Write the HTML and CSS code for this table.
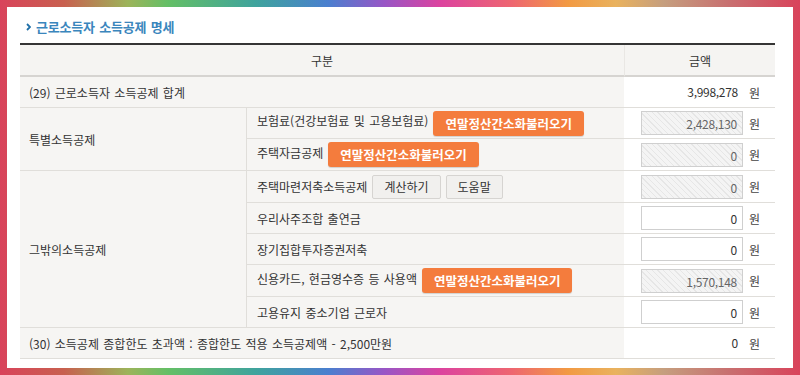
FILE: index.html
```html
<!DOCTYPE html>
<html lang="ko">
<head>
<meta charset="utf-8">
<title>근로소득자 소득공제 명세</title>
<link rel="stylesheet" href="styles.css">
</head>
<body>
<div class="frame">
  <h2 class="title"><svg class="chev" width="5" height="8" viewBox="0 0 5 8"><path d="M1 1 L4 4 L1 7" fill="none" stroke="#1f6fa8" stroke-width="1.8"/></svg>근로소득자 소득공제 명세</h2>
  <table class="grid">
    <colgroup><col class="c1"><col class="c2"><col class="c3"></colgroup>
    <thead>
      <tr><th colspan="2">구분</th><th class="th-amt">금액</th></tr>
    </thead>
    <tbody>
      <tr>
        <td colspan="2" class="label">(29) 근로소득자 소득공제 합계</td>
        <td class="amt"><span class="val">3,998,278</span><span class="won">원</span></td>
      </tr>
      <tr>
        <td rowspan="2" class="label cat">특별소득공제</td>
        <td class="sub"><div class="line"><span class="txt up">보험료(건강보험료 및 고용보험료)</span><button class="btn-o">연말정산간소화불러오기</button></div></td>
        <td class="amt"><span class="inp ro">2,428,130</span><span class="won">원</span></td>
      </tr>
      <tr class="tall">
        <td class="sub"><div class="line"><span class="txt up">주택자금공제</span><button class="btn-o">연말정산간소화불러오기</button></div></td>
        <td class="amt"><span class="inp ro">0</span><span class="won">원</span></td>
      </tr>
      <tr class="tall">
        <td rowspan="5" class="label cat">그밖의소득공제</td>
        <td class="sub"><div class="line"><span class="txt">주택마련저축소득공제</span><button class="btn-g">계산하기</button><button class="btn-g">도움말</button></div></td>
        <td class="amt"><span class="inp ro">0</span><span class="won">원</span></td>
      </tr>
      <tr>
        <td class="sub"><div class="line"><span class="txt">우리사주조합 출연금</span></div></td>
        <td class="amt"><span class="inp">0</span><span class="won">원</span></td>
      </tr>
      <tr>
        <td class="sub"><div class="line"><span class="txt">장기집합투자증권저축</span></div></td>
        <td class="amt"><span class="inp">0</span><span class="won">원</span></td>
      </tr>
      <tr class="tall">
        <td class="sub"><div class="line"><span class="txt up">신용카드, 현금영수증 등 사용액</span><button class="btn-o">연말정산간소화불러오기</button></div></td>
        <td class="amt"><span class="inp ro">1,570,148</span><span class="won">원</span></td>
      </tr>
      <tr>
        <td class="sub"><div class="line"><span class="txt">고용유지 중소기업 근로자</span></div></td>
        <td class="amt"><span class="inp">0</span><span class="won">원</span></td>
      </tr>
      <tr>
        <td colspan="2" class="label">(30) 소득공제 종합한도 초과액 : 종합한도 적용 소득공제액 - 2,500만원</td>
        <td class="amt"><span class="val">0</span><span class="won">원</span></td>
      </tr>
    </tbody>
  </table>
</div>
</body>
</html>
```

FILE: styles.css
```css
html, body {
  margin: 0;
  padding: 0;
}
body {
  width: 800px;
  height: 375px;
  overflow: hidden;
  background: linear-gradient(90deg,
    #d9435b 0%, #c8604f 8%, #9cb45a 16%, #64bf66 21%, #3fa39d 32%,
    #4a7fcf 41%, #9856c6 48%, #dc439f 55%, #ee6670 64%, #f29a43 71%,
    #e9b25e 77%, #c59e7e 83%, #c87070 91%, #d9435b 100%);
  font-family: "Noto Sans CJK KR", "Noto Sans", sans-serif;
  color: #333;
}
.frame {
  margin: 7px;
  height: 361px;
  background: #fff;
  box-sizing: border-box;
  padding: 11px 18px 0 13px;
}
.title {
  margin: 0 0 7px 0;
  padding-left: 6px;
  height: 18px;
  line-height: 18px;
  font-size: 13px;
  font-weight: bold;
  color: #3a86bd;
  letter-spacing: -0.2px;
  word-spacing: 1px;
  display: flex;
  align-items: center;
  gap: 5px;
}
.chev { display: block; }
.grid {
  width: 755px;
  border-collapse: separate;
  border-spacing: 0;
  table-layout: fixed;
  font-size: 12px;
  letter-spacing: 0;
  word-spacing: 1px;
  border-top: 2px solid #353535;
}
.c1 { width: 226px; }
.c2 { width: 378px; }
.c3 { width: 151px; }
.grid th {
  height: 30px;
  padding: 0;
  background: #f5f4f2;
  font-weight: normal;
  color: #333;
  border-bottom: 2px solid #d6d4d1;
}
.grid th.th-amt {
  border-left: 1px solid #e9e7e4;
}
.grid td {
  height: 30px;
  padding: 0;
  border-bottom: 1px solid #e0deda;
}
.grid tr.tall td { height: 31px; }
.grid td.label {
  background: #f6f5f3;
  padding-left: 9px;
  color: #333;
}
.grid td.cat { vertical-align: middle; }
.grid td.sub {
  background: #f6f5f3;
  border-left: 1px solid #e0deda;
  padding-left: 10px;
}
.line {
  display: flex;
  align-items: center;
  gap: 5px;
}
.txt.up { padding-bottom: 5px; }
.btn-o {
  font-family: inherit;
  font-size: 12.5px;
  font-weight: bold;
  letter-spacing: 0;
  color: #fff;
  background: #f47c3d;
  border: none;
  border-radius: 3px;
  height: 25px;
  padding: 0 12px;
  box-shadow: 0 1px 1px rgba(0,0,0,0.15);
}
.btn-g {
  font-family: inherit;
  font-size: 12px;
  letter-spacing: 0;
  color: #333;
  background: #f1f0ee;
  border: 1px solid #d6d4d1;
  border-radius: 2px;
  height: 24px;
  padding: 0 11px;
}
.grid td.amt {
  background: #fff;
  text-align: right;
  padding-right: 15px;
  white-space: nowrap;
  word-spacing: 0;
}
.inp, .val {
  display: inline-block;
  vertical-align: middle;
  width: 102px;
  height: 24px;
  line-height: 24px;
  box-sizing: border-box;
  padding-right: 5px;
  text-align: right;
  letter-spacing: -0.3px;
}
.inp {
  border: 1px solid #cfcfcf;
  color: #333;
  background: #fff;
}
.inp.ro {
  color: #666;
  background: repeating-linear-gradient(45deg, #f4f4f4 0 2px, #e6e6e6 2px 3px, #f4f4f4 3px 4px);
}
.won {
  display: inline-block;
  vertical-align: middle;
  margin-left: 6px;
  color: #444;
}
```
